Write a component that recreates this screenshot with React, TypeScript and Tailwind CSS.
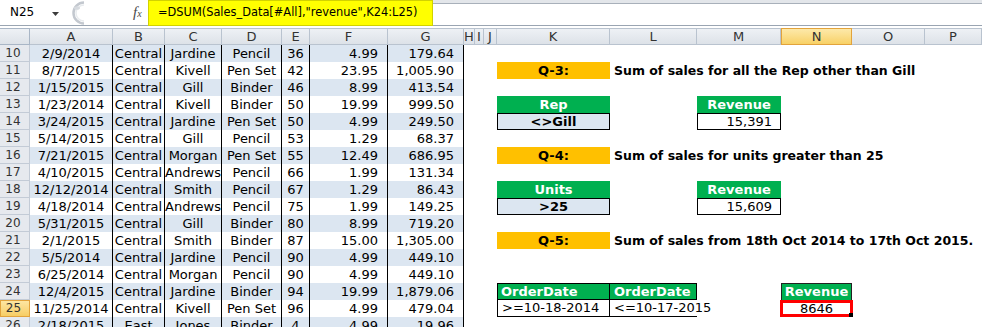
import React from "react";

// sheet columns: row header, A..G table, H I J spacers, K..P question area
const GRID =
  "grid auto-rows-[17px] grid-cols-[30px_83px_52px_57px_60px_28px_78px_76px_11px_9px_13px_113px_87px_84px_71px_73px_1fr]";

const LETTERS = ["A", "B", "C", "D", "E", "F", "G", "H", "I", "J", "K", "L", "M", "N", "O", "P"];

const sales: string[][] = [
  ["10", "2/9/2014", "Central", "Jardine", "Pencil", "36", "4.99", "179.64"],
  ["11", "8/7/2015", "Central", "Kivell", "Pen Set", "42", "23.95", "1,005.90"],
  ["12", "1/15/2015", "Central", "Gill", "Binder", "46", "8.99", "413.54"],
  ["13", "1/23/2014", "Central", "Kivell", "Binder", "50", "19.99", "999.50"],
  ["14", "3/24/2015", "Central", "Jardine", "Pen Set", "50", "4.99", "249.50"],
  ["15", "5/14/2015", "Central", "Gill", "Pencil", "53", "1.29", "68.37"],
  ["16", "7/21/2015", "Central", "Morgan", "Pen Set", "55", "12.49", "686.95"],
  ["17", "4/10/2015", "Central", "Andrews", "Pencil", "66", "1.99", "131.34"],
  ["18", "12/12/2014", "Central", "Smith", "Pencil", "67", "1.29", "86.43"],
  ["19", "4/18/2014", "Central", "Andrews", "Pencil", "75", "1.99", "149.25"],
  ["20", "5/31/2015", "Central", "Gill", "Binder", "80", "8.99", "719.20"],
  ["21", "2/1/2015", "Central", "Smith", "Binder", "87", "15.00", "1,305.00"],
  ["22", "5/5/2014", "Central", "Jardine", "Pencil", "90", "4.99", "449.10"],
  ["23", "6/25/2014", "Central", "Morgan", "Pencil", "90", "4.99", "449.10"],
  ["24", "12/4/2015", "Central", "Jardine", "Binder", "94", "19.99", "1,879.06"],
  ["25", "11/25/2014", "Central", "Kivell", "Pen Set", "96", "4.99", "479.04"],
  ["26", "2/18/2015", "East", "Jones", "Binder", "4", "4.99", "19.96"],
];

const align = [
  "text-center",
  "text-center",
  "text-center",
  "text-center",
  "text-center",
  "text-right pr-[9px]",
  "text-right pr-[9px]",
];

const green = "bg-[#00b050] text-white font-bold leading-[17px]";
const quest = "bg-[#ffc000] text-center font-bold leading-[17px]";
const note = "col-span-5 whitespace-nowrap pl-[4px] text-[12.5px] font-bold leading-[17px]";

function Blank({ n }: { n: number }) {
  return (
    <>
      {Array.from({ length: n }).map((_, i) => (
        <div key={i} />
      ))}
    </>
  );
}

function Question({ q, text }: { q: string; text: string }) {
  return (
    <>
      <div className={quest}>{q}</div>
      <div className={note}>{text}</div>
    </>
  );
}

// K..P cells for a given sheet row
function Right({ row }: { row: string }) {
  switch (row) {
    case "11":
      return <Question q="Q-3:" text="Sum of sales for all the Rep other than Gill" />;
    case "13":
      return (
        <>
          <div className={`${green} text-center`}>Rep</div>
          <div />
          <div className={`${green} text-center`}>Revenue</div>
          <Blank n={3} />
        </>
      );
    case "14":
      return (
        <>
          <div className="border border-black bg-[#dce6f1] text-center font-bold leading-[15px]">&lt;&gt;Gill</div>
          <div />
          <div className="border border-black pr-[8px] text-right leading-[15px]">15,391</div>
          <Blank n={3} />
        </>
      );
    case "16":
      return <Question q="Q-4:" text="Sum of sales for units greater than 25" />;
    case "18":
      return (
        <>
          <div className={`${green} text-center`}>Units</div>
          <div />
          <div className={`${green} text-center`}>Revenue</div>
          <Blank n={3} />
        </>
      );
    case "19":
      return (
        <>
          <div className="border border-black bg-[#dce6f1] text-center font-bold leading-[15px]">&gt;25</div>
          <div />
          <div className="border border-black pr-[8px] text-right leading-[15px]">15,609</div>
          <Blank n={3} />
        </>
      );
    case "21":
      return <Question q="Q-5:" text="Sum of sales from 18th Oct 2014 to 17th Oct 2015." />;
    case "24":
      return (
        <>
          <div className="border border-black bg-[#00b050] pl-[3px] font-bold leading-[15px] text-white">OrderDate</div>
          <div className="border border-l-0 border-black bg-[#00b050] pl-[4px] font-bold leading-[15px] text-white">
            OrderDate
          </div>
          <div />
          <div className="border border-b-0 border-[#222] bg-[#00b050] text-center font-bold leading-[16px] text-white">
            Revenue
          </div>
          <Blank n={2} />
        </>
      );
    case "25":
      return (
        <>
          <div className="whitespace-nowrap border-x border-b border-black pl-[4px] leading-[16px]">&gt;=10-18-2014</div>
          <div className="whitespace-nowrap border-b border-black pl-[4px] leading-[16px]">&lt;=10-17-2015</div>
          <div />
          <div className="relative -mx-px border-[3px] border-[#ff0000] text-center leading-[11px]">
            8646
            <span className="absolute -bottom-[3px] -right-[3px] h-[4px] w-[4px] bg-black" />
          </div>
          <Blank n={2} />
        </>
      );
    default:
      return <Blank n={6} />;
  }
}

function FormulaBar() {
  return (
    <div className="flex h-[26px] border-b border-[#9aa5b2] bg-white">
      <div className="relative w-[148px] shrink-0">
        <span className="absolute left-[10px] top-[5px] text-[12px] leading-[15px]">N25</span>
        <svg className="absolute left-[52px] top-[12px]" width="7" height="4" viewBox="0 0 7 4">
          <path d="M0 0 H7 L3.5 4 Z" fill="#3c3c3c" />
        </svg>
        <svg className="absolute left-[64px] top-[1px]" width="22" height="24" viewBox="0 0 22 24">
          <path d="M20 1.5 A 10.5 10.5 0 0 0 20 22.5" fill="none" stroke="#c3c8cf" strokeWidth="2.5" />
          <path d="M20 4 A 8 8 0 0 0 20 20" fill="none" stroke="#e8ebee" strokeWidth="1.5" />
          <ellipse cx="13" cy="7" rx="3" ry="1.8" fill="#d6dadf" />
        </svg>
        <span className="absolute left-[133px] top-[3px] font-['Liberation_Serif',serif] text-[15px] italic leading-[18px] text-[#4a4a4a]">
          f<span className="text-[10px]">x</span>
        </span>
      </div>
      <div className="flex-1 border-t-[3px] border-[#e3e6ea]">
        <div className="h-full border-t border-[#a8b0ba]">
          <div className="-mt-[4px] h-[26px] w-[285px] border border-[#d2d200] bg-[#ffff00] pl-[9px] text-[11.4px] leading-[23px] text-black">
            =DSUM(Sales_Data[#All],"revenue",K24:L25)
          </div>
        </div>
      </div>
    </div>
  );
}

export default function App() {
  return (
    <div className="h-[327px] w-[982px] overflow-hidden bg-white font-['DejaVu_Sans',sans-serif] text-[13px] text-black">
      <FormulaBar />
      <div className="h-[2px] bg-white" />
      <div className={GRID}>
        {/* column headers */}
        <div className="border-y border-r border-[#a9b6c6] bg-gradient-to-b from-[#eef1f5] to-[#dde2e8]" />
        {LETTERS.map((l) => (
          <div
            key={l}
            className={
              l === "N"
                ? "border border-[#e2a33c] bg-gradient-to-b from-[#fde9a9] to-[#f8d165] text-center leading-[15px] text-[#333]"
                : "overflow-hidden border-y border-r border-[#b9c3cf] bg-gradient-to-b from-[#eef1f5] to-[#dde2e8] text-center leading-[15px] text-[#333]"
            }
          >
            {l}
          </div>
        ))}

        {sales.map((r) => {
          const stripe = Number(r[0]) % 2 === 0 ? "bg-[#dce6f1]" : "bg-white";
          return (
            <React.Fragment key={r[0]}>
              <div
                className={
                  r[0] === "25"
                    ? "border border-[#e2a33c] bg-gradient-to-b from-[#fde6a2] to-[#f7cd63] pr-[3px] text-center text-[12px] leading-[15px] text-[#333]"
                    : "border-b border-r border-[#c3cbd6] bg-[#e6e9ee] pr-[3px] text-center text-[12px] leading-[16px] text-[#333]"
                }
              >
                {r[0]}
              </div>
              {r.slice(1).map((v, i) => (
                <div
                  key={i}
                  className={`${stripe} ${align[i]} overflow-hidden whitespace-nowrap border-r border-black leading-[17px]`}
                >
                  {v}
                </div>
              ))}
              <Blank n={3} />
              <Right row={r[0]} />
            </React.Fragment>
          );
        })}
      </div>
    </div>
  );
}
